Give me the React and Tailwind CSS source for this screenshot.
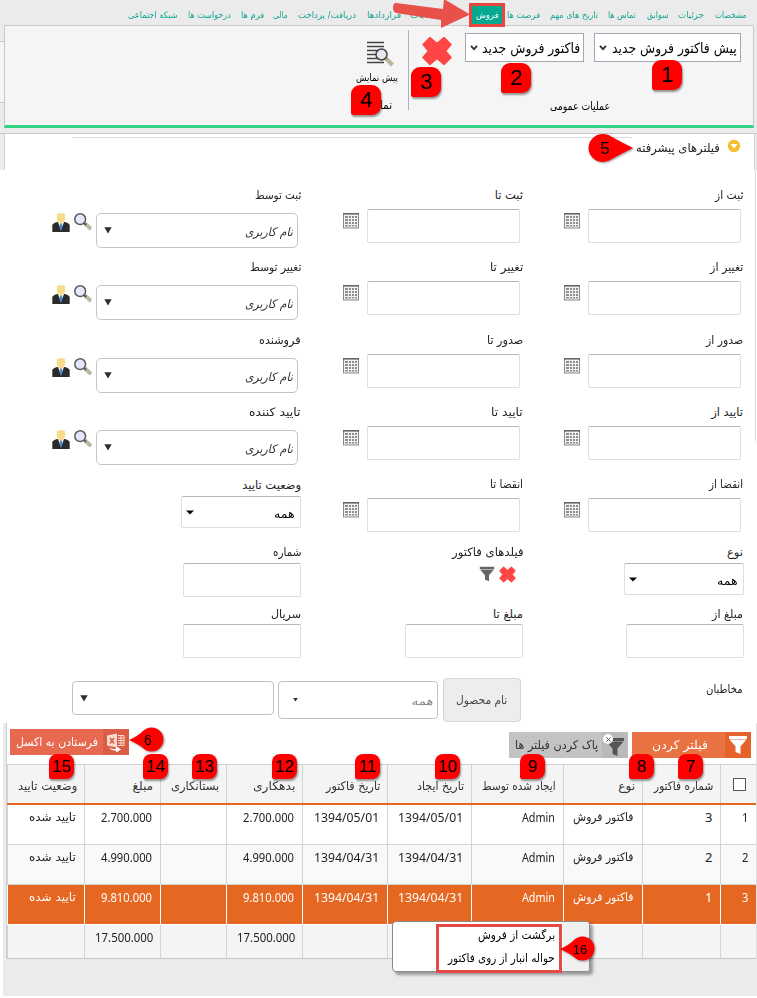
import { useLayoutEffect, useRef, useState } from "react";

// A single line of text squeezed or stretched horizontally to a given width.
function Fit({ w, className = "", dir = "rtl", children }) {
  const ref = useRef(null);
  const [k, setK] = useState(1);
  useLayoutEffect(() => {
    const n = ref.current.offsetWidth;
    if (n) setK(w / n);
  }, [w, children]);
  return (
    <span dir={dir} className={"inline-flex shrink-0 items-center leading-none " + className} style={{ width: w }}>
      <span
        ref={ref}
        className={"inline-block whitespace-nowrap " + (dir === "rtl" ? "origin-right" : "origin-left")}
        style={{ transform: `scaleX(${k})` }}
      >
        {children}
      </span>
    </span>
  );
}

function Cross({ className }) {
  return (
    <svg viewBox="0 0 30 30" className={className}>
      <path d="M8 1.500 15 7.500 22 1.500 29 8.500 23.500 15 29 21.500 22 28.500 15 22.500 8 28.500 1 21.500 6.500 15 1 8.500Z" fill="#ff4545" stroke="#ff4545" strokeWidth="1.500" strokeLinejoin="round" />
    </svg>
  );
}

function Calendar() {
  return (
    <svg viewBox="0 0 16 16" className="h-4 w-4 shrink-0">
      <rect x="0.500" y="0.500" width="15" height="14.500" fill="#f4f4f4" stroke="#8a8a8a" />
      <rect x="0" y="0" width="16" height="1.600" fill="#666" />
      <rect x="2" y="3" width="12" height="10.500" fill="#8d8d8d" />
      <path d="M5.500 3v10.500M8.500 3v10.500M11.500 3v10.500M2 5.500h12M2 8.500h12M2 11.500h12" stroke="#f4f4f4" strokeWidth="1" />
    </svg>
  );
}

function Magnifier() {
  return (
    <svg viewBox="0 0 18 18" className="h-[18px] w-[18px] shrink-0">
      <path d="M11 10.500 17 16" stroke="#bdb9a0" strokeWidth="4" />
      <path d="M9.500 9.500 12 12" stroke="#555" strokeWidth="2" />
      <circle cx="6.200" cy="6.200" r="5.400" fill="#e9e6fb" stroke="#5a5a62" strokeWidth="1.500" />
    </svg>
  );
}

function Person() {
  return (
    <svg viewBox="0 0 18 19" className="h-[19px] w-[18px] shrink-0">
      <path d="M0.300 19v-6.500c0-2 3-3 5-3.500h7.400c2 .5 5 1.500 5 3.500V19Z" fill="#2b2b2b" />
      <path d="M6 9h6L9 17Z" fill="#fff" />
      <path d="M8.200 10h1.600l.6 4L9 18l-1.400-3.500Z" fill="#4a86d8" />
      <path d="M4.800 1.200Q9-1 13.200 1.200V6Q13 8 11.500 9L9 11 6.500 9Q5 8 4.800 6Z" fill="#f8dc8c" />
    </svg>
  );
}

function Funnel({ className, fill }) {
  return (
    <svg viewBox="0 0 20 20" className={className}>
      <path d="M1 1h18v3H1ZM1.500 4.600h17L12.500 11.500V19l-5-2v-5.500Z" fill={fill} />
    </svg>
  );
}

function Arrow({ className = "" }) {
  return (
    <svg viewBox="0 0 8 7" className={"h-[7px] w-[8px] shrink-0 " + className}>
      <path d="M0.300 0.300h7.400L4 6.500Z" fill="#2e2e2e" />
    </svg>
  );
}

const box = "border border-[#dcdfe3] border-t-[#b4b8bc] rounded-[2px] bg-white shrink-0 ";

function DateField({ label, lw, mr }) {
  return (
    <div>
      <div className="flex h-[24px] items-start pt-[5px]"><Fit w={lw}>{label}</Fit></div>
      <div className={"flex items-start " + mr}>
        <div className={box + "h-[34px] w-[153px]"} />
        <div className="mr-[8px] mt-[4px]"><Calendar /></div>
      </div>
    </div>
  );
}

function UserField({ label, lw }) {
  return (
    <div>
      <div className="flex h-[24px] items-start pt-[5px]"><Fit w={lw}>{label}</Fit></div>
      <div className="mr-[3px] flex items-start pt-[4px]">
        <div className="flex h-[35px] w-[202px] items-center justify-between rounded-[5px] border border-[#c4c4c4] bg-white pl-[7px] pr-[4px]">
          <Fit w={48} className="pt-[3px] text-[12px] italic text-[#333]">نام کاربری</Fit>
          <Arrow />
        </div>
        <div className="mr-[4px]"><Magnifier /></div>
        <div className="mr-[4px]"><Person /></div>
      </div>
    </div>
  );
}

function Select({ className }) {
  return (
    <div className={box + "flex h-[32px] w-[120px] items-center justify-between pl-[4px] pr-[5px] " + className}>
      <Fit w={21} className="pt-[3px] text-[12px] text-black">همه</Fit>
      <svg viewBox="0 0 8 5" className="h-[5px] w-[8px]"><path d="M0 .5h8L4 4.500Z" fill="#000" /></svg>
    </div>
  );
}

function Ribbon({ label, lw, width }) {
  return (
    <div className={"flex h-[29px] items-center justify-between border border-[#a4a8b4] bg-white pl-[4px] pr-[3px] " + width}>
      <Fit w={lw} className="text-[14px] text-black">{label}</Fit>
      <svg viewBox="0 0 8 6" className="h-[6px] w-[8px]"><path d="M1 .8 4 4.200 7 .8" fill="none" stroke="#333" strokeWidth="1.800" /></svg>
    </div>
  );
}

function Badge({ n, pos, big }) {
  return (
    <div className={"absolute z-10 flex items-center justify-center bg-[#fe0000] font-[Arial,'Liberation_Sans',sans-serif] leading-none text-black shadow-[1px_2px_2px_rgba(0,0,0,0.4)] " + (big ? "h-[30px] w-[30px] rounded-[9px] rounded-bl-[2px] text-[22px] " : "h-[25px] w-[25px] rounded-[8px] rounded-bl-[2px] text-[17px] ") + pos}>
      {n}
    </div>
  );
}

const tabs = [
  ["مشخصات", 32, 0], ["جزئیات", 26, 11], ["سوابق", 22, 9], ["تماس ها", 28, 11], ["تاریخ های مهم", 48, 10], ["فرصت ها", 33, 10],
];
const tabs2 = [
  ["شکایات", 30, 0], ["قراردادها", 34, 9], ["دریافت/ پرداخت", 58, 11], ["مالی", 15, 10], ["فرم ها", 23, 9], ["درخواست ها", 43, 10], ["شبکه اجتماعی", 50, 10],
];

const dates = [
  ["ثبت از", 28, "ثبت تا", 28, "ثبت توسط", 46],
  ["تغییر از", 33, "تغییر تا", 33, "تغییر توسط", 51],
  ["صدور از", 37, "صدور تا", 36, "فروشنده", 42],
  ["تایید از", 32, "تایید تا", 32, "تایید کننده", 52],
];

const cols = "grid grid-cols-[36px_78px_79px_92px_84px_85px_76px_66px_76px_77px]";
const heads = [["شماره فاکتور", 59], ["نوع", 17], ["ایجاد شده توسط", 74], ["تاریخ ایجاد", 47], ["تاریخ فاکتور", 54], ["بدهکاری", 42], ["بستانکاری", 48], ["مبلغ", 20], ["وضعیت تایید", 59]];
const rows = [
  ["1", "3", "1394/05/01", "2.700.000"],
  ["2", "2", "1394/04/31", "4.990.000"],
  ["3", "1", "1394/04/31", "9.810.000"],
];

function Row({ r, i }) {
  const on = i === 2;
  const c = "flex items-start border-l pr-[8px] pt-[5px] " + (on ? "border-white" : "border-[#d4d4d4]");
  const num = "h-[14px] font-['Noto_Sans'] text-[13px]";
  return (
    <div className={cols + " h-[40px] border-b " + (on ? "border-white bg-[#e66721] text-white" : i ? "border-[#d4d4d4] bg-[#f9f9f9]" : "border-[#d4d4d4] bg-white")}>
      <div className={c}><Fit w={6} dir="ltr" className={num}>{r[0]}</Fit></div>
      <div className={c}><Fit w={7} dir="ltr" className={num}>{r[1]}</Fit></div>
      <div className={c}><Fit w={61} className="h-[16px]">فاکتور فروش</Fit></div>
      <div className={c}><Fit w={33} dir="ltr" className={num}>Admin</Fit></div>
      <div className={c}><Fit w={65} dir="ltr" className={num}>{r[2]}</Fit></div>
      <div className={c}><Fit w={65} dir="ltr" className={num}>{r[2]}</Fit></div>
      <div className={c}><Fit w={51} dir="ltr" className={num}>{r[3]}</Fit></div>
      <div className={c} />
      <div className={c}><Fit w={51} dir="ltr" className={num}>{r[3]}</Fit></div>
      <div className={c}><Fit w={47} className="h-[16px]">تایید شده</Fit></div>
    </div>
  );
}

export default function App() {
  return (
    <div dir="rtl" className="relative h-[998px] w-[757px] overflow-hidden bg-[#ebebeb] font-['DejaVu_Sans',sans-serif] text-[11.500px] text-[#222]">
      {/* tabs */}
      <div className="flex h-[25px] items-center pr-[10px] text-[9px] text-[#14a690]">
        {tabs.map(([t, w, g]) => (
          <div key={t} className="flex pt-[6px]"><div style={{ width: g }} /><Fit w={w}>{t}</Fit></div>
        ))}
        <div className="z-10 mr-[2px] mt-[5px] flex h-[24px] w-[36px] items-center justify-center border-[3px] border-[#e8463f] bg-[#06a88f] text-white">
          <Fit w={23}>فروش</Fit>
        </div>
        <div className="w-[29px]" />
        {tabs2.map(([t, w, g]) => (
          <div key={t} className="flex pt-[6px]"><div style={{ width: g }} /><Fit w={w}>{t}</Fit></div>
        ))}
      </div>

      {/* ribbon */}
      <div className="flex">
        <div className="w-[3px] shrink-0" />
        <div className="flex h-[103px] w-[750px] border border-b-[3px] border-[#c9c9c9] border-b-[#2fd585] bg-[#f5f5f5]">
          <div className="flex w-[344px] flex-col pr-[12px] pt-[7px]">
            <div className="flex items-start">
              <Ribbon label="پیش فاکتور فروش جدید" lw={125} width="w-[147px]" />
              <div className="w-[10px]" />
              <Ribbon label="فاکتور فروش جدید" lw={98} width="w-[119px]" />
              <Cross className="mr-[13px] mt-[3px] h-[30px] w-[30px]" />
            </div>
            <div className="mr-[131px] mt-[35px] flex"><Fit w={60} className="text-black">عملیات عمومی</Fit></div>
          </div>
          <div className="mt-[4px] h-[80px] w-px bg-[#a9b4c2]" />
          <div className="flex w-[70px] flex-col pr-[10px] pt-[14px]">
            <svg viewBox="0 0 28 30" className="mr-[3px] h-[30px] w-[28px]">
              <path d="M0 2.500h17M0 6.500h17M0 10.500h17M0 14.500h17M0 18.500h17M0 22.500h17" stroke="#444" strokeWidth="1.500" />
              <path d="M19 18.500 25.500 25" stroke="#b9b398" strokeWidth="4" />
              <circle cx="14.500" cy="14.500" r="5.500" fill="#e6e6f4" stroke="#444" strokeWidth="1.500" />
            </svg>
            <div className="mt-[3px] flex"><Fit w={42} className="text-[10px] text-black">پیش نمایش</Fit></div>
            <div className="mr-[6px] mt-[17px] flex"><Fit w={29} className="text-black">نمایش</Fit></div>
          </div>
        </div>
      </div>

      {/* advanced filter title */}
      <div className="mt-[5px] flex h-[37px] border-t border-[#c9c9c9]">
        <div className="w-[2px]" />
        <div className="w-[751px] border-x border-[#d0d0d0] bg-white">
          <div className="mr-[122px] mt-[3px] h-px w-[560px] bg-[#dcdcdc]" />
          <div className="flex items-center pr-[13px] pt-px">
            <svg viewBox="0 0 14 14" className="-mt-[2px] h-[14px] w-[14px]">
              <circle cx="7" cy="7" r="6.200" fill="#f5bd32" />
              <path d="M3.500 5h7L7 9.500Z" fill="#fff" />
            </svg>
            <Fit w={84} className="mr-[7px] mt-[3px] text-[12px]">فیلترهای پیشرفته</Fit>
          </div>
        </div>
      </div>

      {/* filter form */}
      <div className="h-[553px] bg-white pr-[14px] pt-[15px]">
        {dates.map((d) => (
          <div key={d[0]} className="grid h-[72.330px] grid-cols-[220px_222px_301px]">
            <DateField label={d[0]} lw={d[1]} mr="mr-[2px]" />
            <DateField label={d[2]} lw={d[3]} mr="mr-[3px]" />
            <UserField label={d[4]} lw={d[5]} />
          </div>
        ))}
        <div className="grid h-[67px] grid-cols-[220px_222px_301px]">
          <DateField label="انقضا از" lw={34} mr="mr-[2px]" />
          <DateField label="انقضا تا" lw={33} mr="mr-[3px]" />
          <div>
            <div className="flex h-[22px] pt-[5px]"><Fit w={59} className="h-[12px]">وضعیت تایید</Fit></div>
            <Select />
          </div>
        </div>
        <div className="grid h-[62px] grid-cols-[220px_222px_301px]">
          <div>
            <div className="flex h-[22px] pt-[5px]"><Fit w={16} className="h-[12px]">نوع</Fit></div>
            <Select className="-mr-px" />
          </div>
          <div>
            <div className="flex h-[22px] pt-[5px]"><Fit w={71} className="h-[12px]">فیلدهای فاکتور</Fit></div>
            <div className="flex pr-[7px] pt-[3px]">
              <Cross className="h-[17px] w-[17px]" />
              <Funnel className="mr-[4px] h-[16px] w-[16px]" fill="#666" />
            </div>
          </div>
          <div>
            <div className="flex h-[22px] pt-[5px]"><Fit w={28} className="h-[12px]">شماره</Fit></div>
            <div className={box + "h-[34px] w-[118px]"} />
          </div>
        </div>
        <div className="grid h-[75px] grid-cols-[220px_222px_301px]">
          {[["مبلغ از", 31, "-mr-px"], ["مبلغ تا", 30, ""], ["سریال", 30, ""]].map(([t, w, m]) => (
            <div key={t}>
              <div className="flex h-[21px] pt-[5px]"><Fit w={w} className="h-[12px]">{t}</Fit></div>
              <div className={box + "h-[34px] w-[118px] " + m} />
            </div>
          ))}
        </div>
        <div className="flex items-start">
          <Fit w={37} className="mt-[6px]">مخاطبان</Fit>
          <div className="mr-[185px] flex h-[44px] w-[78px] items-center justify-center rounded-[4px] border border-[#d4d4d4] bg-[#ededed]">
            <Fit w={51} className="text-[#444]">نام محصول</Fit>
          </div>
          <div className="mr-[5px] mt-[3px] flex h-[38px] w-[160px] items-center justify-between rounded-[4px] border border-[#c0c0c0] bg-white pl-[14px] pr-[4px]">
            <Fit w={22} className="pt-[3px] italic text-[#888]">همه</Fit>
            <svg viewBox="0 0 6 5" className="h-[4px] w-[5px]"><path d="M0 0h6L3 4.500Z" fill="#333" /></svg>
          </div>
          <div className="mr-[4px] mt-[3px] flex h-[34px] w-[202px] items-center justify-end rounded-[4px] border border-[#c0c0c0] bg-white pl-[7px]">
            <Arrow />
          </div>
        </div>
      </div>

      {/* toolbar and grid */}
      <div className="flex">
        <div className="w-px shrink-0 bg-[#e0e0e0]" />
        <div className="w-[750px] shrink-0 border-l border-[#cfcfcf]">
          <div className="flex h-[41px] items-start bg-white pr-[5px]">
            <div className="mt-[9px] flex h-[26px] w-[119px] bg-[#e97243]">
              <div className="flex w-[26px] items-center justify-center bg-[#e5622a]"><Funnel className="h-[20px] w-[20px]" fill="#fff" /></div>
              <Fit w={56} className="mr-[17px] text-[12px] text-white">فیلتر کردن</Fit>
            </div>
            <div className="mr-[4px] mt-[9px] flex h-[26px] w-[119px] bg-[#c3c3c3]">
              <div className="relative flex w-[26px] items-center justify-center bg-[#bababa]">
                <Funnel className="mt-[4px] h-[20px] w-[20px]" fill="#555" />
                <div className="absolute left-px top-[2px] flex h-[10px] w-[10px] items-center justify-center rounded-full bg-white">
                  <svg viewBox="0 0 6 6" className="h-[5px] w-[5px]"><path d="M.5.5l5 5M5.500.5l-5 5" stroke="#555" strokeWidth="1.200" /></svg>
                </div>
              </div>
              <Fit w={83} className="mr-[4px] text-[12px] text-[#333]">پاک کردن فیلتر ها</Fit>
            </div>
            <div className="mr-[380px] mt-[6px] flex h-[26px] w-[119px] bg-[#e7694f]">
              <div className="flex w-[26px] items-center justify-center bg-[#da5e45]">
                <svg viewBox="0 0 18 19" className="h-[19px] w-[18px]">
                  <path d="M0 2.500 10 .5v14L0 12.500Z" fill="#fbd9d1" />
                  <path d="M3 5l4 5.500M7 5l-4 5.500" stroke="#da5e45" strokeWidth="1.500" />
                  <path d="M11 2.500h6v10h-6M11 5h6M11 7.500h6M11 10h6M14 2.500v10" fill="none" stroke="#fbd9d1" />
                  <path d="M2 14q3 3 7 1.500v-2.500l5 3.500-5 3v-2Q4 18 2 14Z" fill="#fff" />
                </svg>
              </div>
              <Fit w={82} className="mr-[5px] text-[12px] text-white">فرستادن به اکسل</Fit>
            </div>
          </div>
          <div className={cols + " h-[41px] border-t border-b-2 border-t-[#d0d0d0] border-b-[#e66721] bg-[#f4f4f4] text-[#333]"}>
            <div className="border-l border-[#d4d4d4] pr-[10px] pt-[13px]"><div className="h-[13px] w-[13px] border border-[#555] bg-white" /></div>
            {heads.map(([t, w]) => (
              <div key={t} className="flex items-start border-l border-[#d4d4d4] pr-[7px] pt-[15px]"><Fit w={w} className="text-[12px]">{t}</Fit></div>
            ))}
          </div>
          {rows.map((r, i) => <Row key={i} r={r} i={i} />)}
          <div className={cols + " h-[34px] border-b border-[#c6c6c6] bg-[#f4f4f4]"}>
            {[0, 0, 0, 0, 0, 0, 1, 0, 1, 0].map((v, i) => (
              <div key={i} className="flex items-start border-l border-[#d4d4d4] pr-[7px] pt-[5px]">
                {v ? <Fit w={58} dir="ltr" className="h-[14px] font-['Noto_Sans'] text-[13px]">17.500.000</Fit> : null}
              </div>
            ))}
          </div>
        </div>
      </div>

      {/* window edges */}
      <div className="absolute left-0 top-[723px] h-[275px] w-[3px] bg-white" />
      <div className="absolute bottom-0 left-0 h-[2px] w-full bg-white" />
      <div className="absolute left-0 top-[41px] h-[62px] w-[4px] border-y border-[#c9c9c9] bg-[#f5f5f5]" />
      <div className="absolute right-[1px] top-[170px] h-[271px] w-px bg-[#dcdcdc]" />

      {/* context menu */}
      <div className="absolute left-[392px] top-[921px] flex h-[51px] w-[198px] overflow-hidden rounded-[4px] border border-[#8a8a8a] bg-white shadow-[3px_3px_3px_rgba(0,0,0,0.35)]">
        <div className="w-[26px] shrink-0 bg-[#f0f0f0]" />
        <div className="flex flex-col pr-[8px] pt-[8px] text-black">
          <Fit w={77}>برگشت از فروش</Fit>
          <Fit w={107} className="mt-[11px]">حواله انبار از روی فاکتور</Fit>
        </div>
      </div>
      <div className="absolute left-[436px] top-[924px] h-[49px] w-[126px] border-[3px] border-[#e64a45]" />

      {/* callouts */}
      <svg viewBox="0 0 80 32" className="absolute left-[391px] top-0 z-20 h-[32px] w-[80px]">
        <path d="M5 3 52 9 53-1 79 14.500 50 28 50 20 5 13Q2 12 2 8 2 3 5 3Z" fill="#e8504a" />
      </svg>
      <Badge big n="1" pos="left-[652px] top-[60px]" />
      <Badge big n="2" pos="left-[501px] top-[63px]" />
      <Badge big n="3" pos="left-[411px] top-[67px]" />
      <Badge big n="4" pos="left-[351px] top-[85px]" />
      <Badge n="7" pos="left-[678px] top-[754px]" />
      <Badge n="8" pos="left-[629px] top-[754px]" />
      <Badge n="9" pos="left-[520px] top-[754px]" />
      <Badge n="10" pos="left-[435px] top-[754px]" />
      <Badge n="11" pos="left-[355px] top-[754px]" />
      <Badge n="12" pos="left-[272px] top-[754px]" />
      <Badge n="13" pos="left-[192px] top-[754px]" />
      <Badge n="14" pos="left-[143px] top-[754px]" />
      <Badge n="15" pos="left-[49px] top-[754px]" />
      <svg viewBox="0 0 48 32" className="absolute left-[586px] top-[133px] h-[32px] w-[48px] drop-shadow-[1px_1px_1px_rgba(0,0,0,0.4)]">
        <path d="M47 15Q33 8 26 4A14.500 14 0 1 0 26 26Q33 22 47 15Z" fill="#fe0000" />
        <text x="19" y="21" textAnchor="middle" fontSize="17" fontFamily="Arial, Liberation Sans, sans-serif">5</text>
      </svg>
      <svg viewBox="0 0 36 26" className="absolute left-[128px] top-[727px] h-[26px] w-[36px] drop-shadow-[1px_1px_1px_rgba(0,0,0,0.4)]">
        <path d="M1 13Q10 9 15 4A12 12 0 1 1 15 21Q10 17 1 13Z" fill="#fe0000" />
        <text x="20" y="18" textAnchor="middle" fontSize="14" fontFamily="Arial, Liberation Sans, sans-serif">6</text>
      </svg>
      <svg viewBox="0 0 36 26" className="absolute left-[559px] top-[936px] h-[26px] w-[36px] drop-shadow-[1px_1px_1px_rgba(0,0,0,0.4)]">
        <path d="M1 13Q10 9 15 4A12 12 0 1 1 15 21Q10 17 1 13Z" fill="#fe0000" />
        <text x="21" y="18" textAnchor="middle" fontSize="13" fontFamily="Arial, Liberation Sans, sans-serif">16</text>
      </svg>
    </div>
  );
}
